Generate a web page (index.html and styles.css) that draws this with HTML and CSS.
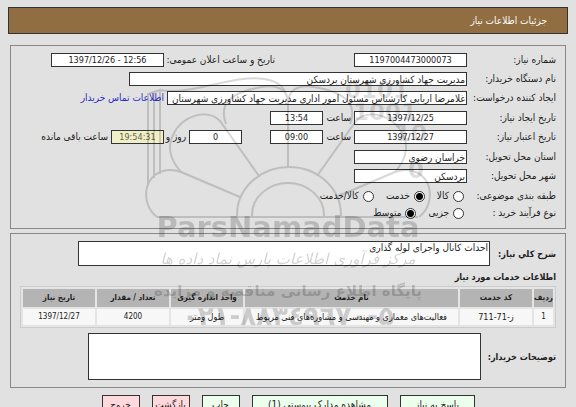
FILE: index.html
```html
<!DOCTYPE html>
<html lang="fa" dir="rtl">
<head>
<meta charset="utf-8">
<title>جزئیات اطلاعات نیاز</title>
<link rel="stylesheet" href="styles.css">
</head>
<body>
<header class="titlebar"><h1>جزئیات اطلاعات نیاز</h1></header>
<main>
<section class="panel details">
  <div class="group">
    <div class="row">
      <label class="name" for="num">شماره نیاز:</label>
      <input class="mid w-l" id="num" value="1197004473000073">
      <label class="name push" for="pub">تاریخ و ساعت اعلان عمومی:</label>
      <input class="mid w-l" id="pub" dir="ltr" value="1397/12/26 - 12:56">
    </div>
    <div class="row">
      <label class="name" for="org">نام دستگاه خریدار:</label>
      <input class="w-xl" id="org" value="مدیریت جهاد کشاورزی شهرستان بردسکن">
    </div>
    <div class="row">
      <label class="name" for="creator">ایجاد کننده درخواست:</label>
      <input class="w-creator" id="creator" value="غلامرضا اربابی کارشناس مسئول امور اداری مدیریت جهاد کشاورزی شهرستان">
      <a href="#contact">اطلاعات تماس خریدار</a>
    </div>
  </div>
  <div class="group">
    <div class="row">
      <label class="name" for="cd">تاریخ ایجاد نیاز:</label>
      <input class="mid w-l" id="cd" value="1397/12/25">
      <label class="unit" for="ct">ساعت</label>
      <input class="mid w-s" id="ct" value="13:54">
    </div>
    <div class="row">
      <label class="name" for="ed">تاریخ اعتبار نیاز:</label>
      <input class="mid w-l" id="ed" value="1397/12/27">
      <label class="unit" for="et">ساعت</label>
      <input class="mid w-s" id="et" value="09:00">
      <input class="mid w-s days" id="days" value="0">
      <label class="unit" for="days">روز و</label>
      <input class="mid w-s remain" id="remain" value="19:54:31">
      <label for="remain">ساعت باقی مانده</label>
    </div>
  </div>
  <div class="group">
    <div class="row">
      <label class="name" for="prov">استان محل تحویل:</label>
      <input class="w-l" id="prov" value="خراسان رضوی">
    </div>
    <div class="row">
      <label class="name" for="city">شهر محل تحویل:</label>
      <input class="w-l" id="city" value="بردسکن">
    </div>
  </div>
  <div class="row choices" role="radiogroup" aria-labelledby="cat">
    <span class="name" id="cat">طبقه بندی موضوعی:</span>
    <label class="opt"><input type="radio" name="cat">کالا</label>
    <label class="opt"><input type="radio" name="cat" checked>خدمت</label>
    <label class="opt"><input type="radio" name="cat">کالا/خدمت</label>
  </div>
  <div class="row choices" role="radiogroup" aria-labelledby="proc">
    <span class="name" id="proc">نوع فرآیند خرید :</span>
    <label class="opt"><input type="radio" name="proc">جزیی</label>
    <label class="opt"><input type="radio" name="proc" checked>متوسط</label>
  </div>
</section>

<section class="panel services">
  <div class="field">
    <label for="desc">شرح کلي نیاز:</label>
    <textarea class="desc" id="desc">احداث کانال واجرای لوله گذاری</textarea>
  </div>
  <h2>اطلاعات خدمات مورد نیاز</h2>
  <table>
    <thead>
      <tr><th class="c-row">ردیف</th><th class="c-std">کد خدمت</th><th>نام خدمت</th><th class="c-std">واحد اندازه گیری</th><th class="c-std">تعداد / مقدار</th><th class="c-std">تاریخ نیاز</th></tr>
    </thead>
    <tbody>
      <tr><td>1</td><td class="text">ز-71-711</td><td class="text">فعالیت‌های معماری و مهندسی و مشاوره‌های فنی مربوط</td><td class="text">طول ومتر</td><td>4200</td><td>1397/12/27</td></tr>
    </tbody>
  </table>
  <div class="field notes-field">
    <label for="notes">توضیحات خریدار:</label>
    <textarea class="notes" id="notes"></textarea>
  </div>
</section>

<div class="actions">
  <button type="button" class="b-l">پاسخ به نیاز</button>
  <button type="button" class="b-xl">مشاهده مدارک پیوستی (1)</button>
  <button type="button">چاپ</button>
  <button type="button" class="red">بازگشت</button>
  <button type="button" class="red">خروج</button>
</div>
</main>

<svg class="watermark" viewBox="143 70 290 270" aria-hidden="true">
  <g class="lines">
    <path d="M157 217H418M237 217V215A52 48 0 0 1 341 215V217M252 217V215A36 32 0 0 1 324 215V217"/>
    <path d="M157 217C145 208 144 192 149 182C156 170 169 168 181 172L240 197"/>
    <path d="M181 172C170 160 167 146 173 135C182 115 208 108 220 121L259 176"/>
    <path d="M226 124C218 103 232 92 262 87C279 84 288 91 288 103V168"/>
    <path d="M288 103C288 91 297 84 314 87C344 92 358 103 350 124"/>
    <path d="M317 176L356 121C368 108 394 115 403 135C409 146 406 160 395 172"/>
    <path d="M336 197L395 172C407 168 420 170 427 182C432 192 431 208 419 217"/>
    <path d="M148 185V94L160 90V174M154 178V93M160 90C190 96 235 74 264 79C279 81 287 88 288 103"/>
  </g>
  <g class="wm">
    <text x="345" y="98" class="bits">0101</text>
    <text x="353" y="120" class="bits">1001</text>
    <text x="395" y="141" class="bits">10</text>
    <text x="408" y="178" class="bits">0</text>
    <text x="288" y="237" class="latin">ParsNamadData</text>
    <text x="288" y="264" class="script">مرکز فرآوری اطلاعات پارس نماد داده ها</text>
    <text x="288" y="296" class="site">پایگاه اطلاع رسانی مناقصه و مزایده</text>
    <text x="288" y="325" class="phone">۰۲۱-۸۸۳٤۹٦۷۰-۵</text>
  </g>
</svg>
</body>
</html>
```
FILE: styles.css
```css
* { box-sizing: border-box; }

body, input, textarea, button {
  font-family: "DejaVu Sans Condensed", "DejaVu Sans", sans-serif;
  font-size: 10px;
  line-height: 12px;
  color: #222;
}

body {
  position: relative;
  margin: 0;
  padding: 7px 8px;
  background: #e1e1e1;
}

.titlebar {
  display: flex;
  align-items: center;
  height: 27px;
  padding: 0 20px;
  border: 1px solid #333;
  background: #916e41;
}

.titlebar h1 {
  margin: 0;
  font-size: 10px;
  font-weight: normal;
  color: #fff;
}

.panel {
  margin: 11px 2px 0;
  padding: 7px 9px;
  border: 1px solid #888;
}

.details { padding-bottom: 8px; }

.group {
  display: flex;
  flex-direction: column;
  gap: 5px;
  margin-bottom: 6px;
}

.row {
  display: flex;
  align-items: center;
  height: 14px;
  white-space: nowrap;
}

.row .name { flex: 0 0 89px; }

.row .push {
  flex-basis: 111px;
  margin-right: 79px;
}

input, textarea {
  margin: 0;
  padding: 0 1px;
  border: 1px solid #333;
  border-radius: 0;
  background: #fff;
}

.row input { height: 14px; }
.mid { font-size: 9px; text-align: center; }
.w-l { width: 113px; }
.w-s { width: 53px; }
.w-xl { width: 338px; }
.w-creator { width: 300px; }
.unit { width: 25px; margin: 0 3px; }
.days { margin-right: 28px; }
.days + .unit { width: 19px; }
.row .remain { background: #f1efc8; color: #66654a; }
.remain + label { margin-right: 3px; }

a {
  margin-right: 3px;
  color: #2c2cc4;
  text-decoration: none;
}

.choices { margin-top: 3px; }
.choices .name { flex-basis: 92px; }

.opt {
  display: flex;
  align-items: center;
  gap: 4px;
  margin-left: 12px;
}

.row input[type="radio"] {
  appearance: none;
  width: 11px;
  height: 11px;
  padding: 0;
  border-radius: 50%;
}

input[type="radio"]:checked {
  background: radial-gradient(circle, #000 0 3px, #fff 4px);
}

.services { margin-top: 4px; }

.field {
  display: flex;
  align-items: center;
  font-size: 9px;
  font-weight: bold;
}

.field label { flex: 0 0 66px; white-space: nowrap; }

textarea {
  display: block;
  resize: none;
  overflow: hidden;
}

.desc { width: 412px; height: 25px; }

h2 {
  margin: 5px 0 3px;
  font-size: 9px;
  line-height: 12px;
}

table {
  width: 100%;
  table-layout: fixed;
  border: 1px solid #ccc;
  border-collapse: separate;
  border-spacing: 2px;
  background: #e4e4e4;
}

th, td {
  padding: 0;
  height: 18px;
  text-align: center;
  font-size: 8px;
  line-height: 12px;
  white-space: nowrap;
}

th { background: #b4b4b4; }
td { height: 16px; background: #f7f7f7; }
td.text { font-size: 9px; }
.c-row { width: 19px; }
.c-std { width: 72px; }

.notes-field { margin-top: 5px; }
.notes-field label { flex-basis: 75px; }
.notes { width: 393px; height: 47px; }

.actions {
  display: flex;
  justify-content: center;
  gap: 12px;
  margin-top: 7px;
}

button {
  width: 38px;
  height: 20px;
  padding: 0;
  border: 1px solid #333;
  background: #ecffec;
}

.b-l { width: 75px; }
.b-xl { width: 136px; }
.red { background: #ffd9dc; }

.watermark {
  position: absolute;
  top: 70px;
  left: calc(50% - 145px);
  width: 290px;
  height: 270px;
  pointer-events: none;
}

.lines {
  fill: none;
  stroke: #000;
  stroke-width: 2;
  opacity: 0.15;
}

.wm {
  fill: #000;
  opacity: 0.18;
  direction: ltr;
  font-family: "DejaVu Sans", sans-serif;
  font-weight: bold;
}

.bits { font-size: 23px; opacity: 0.7; }
.latin { font-size: 29px; text-anchor: middle; }
.script { font-size: 15px; font-style: italic; font-weight: normal; text-anchor: middle; }
.site { font-size: 15px; text-anchor: middle; }
.phone { font-size: 26px; text-anchor: middle; }
```
